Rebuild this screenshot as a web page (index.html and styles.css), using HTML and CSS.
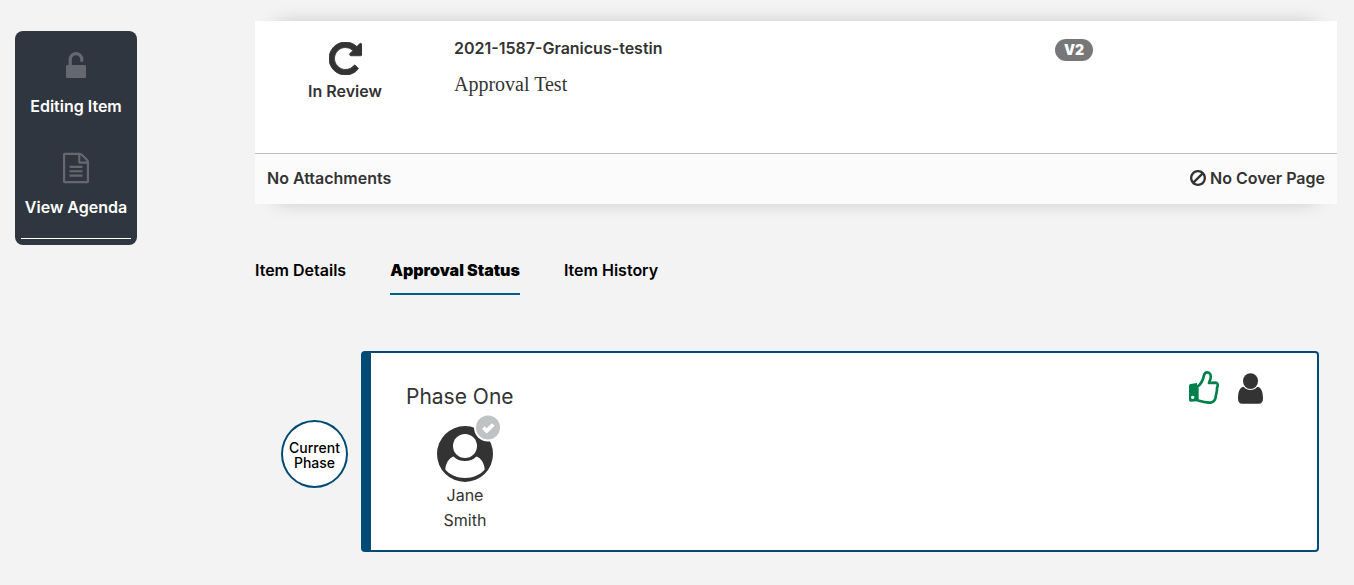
FILE: index.html
```html
<!DOCTYPE html>
<html lang="en">
<head>
<meta charset="utf-8">
<meta name="viewport" content="width=device-width, initial-scale=1">
<title>Approval Status</title>
<link rel="stylesheet" href="styles.css">
</head>
<body>
<div class="page">
  <nav class="sidebar" aria-label="Item actions">
    <a class="side-link" href="#edit">
      <svg class="side-icon" viewBox="0 2 26 32" aria-hidden="true"><path d="M7.200 17V10.500a5.800 5.800 0 0 1 11.600 0V11.500" fill="none" stroke="currentColor" stroke-width="3.200" stroke-linecap="round"/><rect x="3" y="16" width="20" height="13" rx="1.300" fill="currentColor"/></svg>
      <span>Editing Item</span>
    </a>
    <a class="side-link" href="#agenda">
      <svg class="side-icon" viewBox="128 0 1536 1792" aria-hidden="true"><path fill="currentColor" d="M1596 380q28 28 48 76t20 88v1152q0 40-28 68t-68 28h-1344q-40 0-68-28t-28-68v-1600q0-40 28-68t68-28h896q40 0 88 20t76 48zm-444-244v376h376q-10-29-22-41l-313-313q-12-12-41-22zm384 1528v-1024h-416q-40 0-68-28t-28-68v-416h-768v1536h1280zm-1024-864q0-14 9-23t23-9h704q14 0 23 9t9 23v64q0 14-9 23t-23 9h-704q-14 0-23-9t-9-23v-64zm736 224q14 0 23 9t9 23v64q0 14-9 23t-23 9h-704q-14 0-23-9t-9-23v-64q0-14 9-23t23-9h704zm0 256q14 0 23 9t9 23v64q0 14-9 23t-23 9h-704q-14 0-23-9t-9-23v-64q0-14 9-23t23-9h704z"/></svg>
      <span>View Agenda</span>
    </a>
    <hr class="side-rule">
  </nav>

  <main class="content">
    <section class="item-card">
      <div class="item-top">
        <div class="item-state">
          <svg class="state-icon" viewBox="128 128 1536 1536" aria-hidden="true"><path fill="currentColor" stroke="currentColor" stroke-width="40" d="M1664 256v448q0 26-19 45t-45 19h-448q-42 0-59-40-17-39 14-69l138-138q-148-137-349-137-104 0-198.500 40.500t-163.500 109.500-109.500 163.500-40.500 198.500 40.500 198.500 109.500 163.500 163.500 109.500 198.500 40.500q119 0 225-52t179-147q7-10 23-12 15 0 25 9l137 138q9 8 9.500 20.500t-7.500 22.500q-109 132-264 204.500t-327 72.500q-156 0-298-61t-245-164-164-245-61-298 61-298 164-245 245-164 298-61q147 0 284.500 55.500t244.500 156.500l130-129q29-31 70-14 39 17 39 59z"/></svg>
          <span>In Review</span>
        </div>
        <div class="item-info">
          <h1 class="item-number">2021-1587-Granicus-testin</h1>
          <p class="item-title">Approval Test</p>
        </div>
        <div class="item-version"><span class="badge">V2</span></div>
      </div>
      <div class="item-bottom">
        <span>No Attachments</span>
        <span class="cover">
          <svg class="ban-icon" viewBox="128 125 1536 1539" aria-hidden="true"><path fill="currentColor" d="M1440 893q0-161-87-295l-754 753q137 89 297 89 111 0 211.500-43.500t173.500-116.500 116-174.500 43-212.500zm-999 299l755-754q-135-91-300-91-148 0-273 73t-198 199-73 274q0 162 89 299zm1223-299q0 157-61 300t-163.500 246-245 164-298.500 61-298.500-61-245-164-163.500-246-61-300 61-299.500 163.500-245.500 245-164 298.500-61 298.500 61 245 164 163.500 245.500 61 299.500z"/></svg>
          No Cover Page
        </span>
      </div>
    </section>

    <nav class="tabs" aria-label="Item sections">
      <a class="tab" href="#details">Item Details</a>
      <a class="tab tab-active" href="#approval" aria-current="page">Approval Status</a>
      <a class="tab" href="#history">Item History</a>
    </nav>

    <section class="phase-row">
      <div class="phase-marker">Current Phase</div>
      <div class="phase-panel">
        <div>
          <h2 class="phase-name">Phase One</h2>
          <div class="approver">
            <svg class="avatar" viewBox="0 0 66 68" aria-hidden="true">
              <circle cx="29" cy="39" r="28" fill="#333"/>
              <circle cx="29" cy="31" r="12" fill="#fff"/>
              <path d="M17.500 41.500C13 43 9.500 48.500 9.300 54.500C14 60 21 63 29 63C37 63 44 60 48.700 54.500C48.500 48.500 45 43 40.500 41.500C37.500 44.500 33.500 46 29 46C24.500 46 20.500 44.500 17.500 41.500Z" fill="#fff"/>
              <circle cx="52" cy="12.500" r="14" fill="#fff"/>
              <circle cx="52" cy="12.500" r="12" fill="#bfc3c4"/>
              <path d="M47.300 12.600L50.700 15.900L57.300 9.500" fill="none" stroke="#fff" stroke-width="3.800"/>
            </svg>
            <span class="approver-name">Jane Smith</span>
          </div>
        </div>
        <div class="phase-actions">
          <button class="icon-button approve" type="button" aria-label="Approve">
            <svg class="thumb" viewBox="0 0 90 99" aria-hidden="true">
              <path d="M25 47C35 41 40 30 43 21C45 11 46 4 54 4C63 4 66 11 65 20C64 27 61 32 60 36L78 35C86 35 88 42 85 47C84 51 83 54 84 58C83 61 83 64 82 68C81 72 80 75 80 79C78 89 73 94 65 95C50 96 35 91 25 88Z" fill="none" stroke="currentColor" stroke-width="8" stroke-linejoin="round"/>
              <path fill="currentColor" fill-rule="evenodd" d="M5 39L24 36V91L5 92Q0 92 0 87V45Q0 39 5 39ZM11 74a5 5 0 1 0 .1 0Z"/>
            </svg>
          </button>
          <button class="icon-button" type="button" aria-label="Approver">
            <svg class="person" viewBox="0 0 76 93" aria-hidden="true"><ellipse cx="38" cy="24" rx="23" ry="24" fill="currentColor"/><path fill="currentColor" d="M17 41C23 48 30 51 38 51S53 48 59 41C72 43 76 60 76 77C76 87 72 93 63 93H13C4 93 0 87 0 77C0 60 4 43 17 41Z"/></svg>
          </button>
        </div>
      </div>
    </section>
  </main>
</div>
</body>
</html>
```
FILE: styles.css
```css
* {
  box-sizing: border-box;
}

body {
  margin: 0;
  background: #f3f3f3;
  color: #333;
  font: 600 16px/24px Inter, "Liberation Sans", sans-serif;
}

h1, h2, p {
  margin: 0;
}

a {
  color: inherit;
  text-decoration: none;
}

svg {
  display: block;
}

.page {
  display: flex;
  align-items: flex-start;
  gap: 118px;
  padding: 21px 17px 32px 15px;
}

.sidebar {
  flex: none;
  width: 122px;
  margin-top: 10px;
  padding: 20px 6px 6px;
  border-radius: 8px;
  background: #303640;
  color: #fff;
}

.side-link {
  display: flex;
  flex-direction: column;
  align-items: center;
  gap: 11px;
  margin-bottom: 34px;
  white-space: nowrap;
}

.side-link + .side-link {
  margin-bottom: 19px;
}

.side-icon {
  width: 26px;
  height: 32px;
  color: #646871;
}

.side-rule {
  height: 1px;
  margin: 0;
  border: 0;
  background: #fff;
}

.content {
  flex: 1;
  min-width: 0;
}

.item-card {
  position: relative;
  isolation: isolate;
}

.item-card::before {
  content: "";
  position: absolute;
  z-index: -1;
  inset: 6px 22px;
  box-shadow: 0 0 20px rgba(0, 0, 0, 0.3);
}

.item-top {
  display: grid;
  grid-template-columns: 180px 1fr 282px;
  min-height: 132px;
  background: #fff;
}

.item-state {
  display: flex;
  flex-direction: column;
  align-items: center;
  gap: 4px;
  padding-top: 21px;
}

.state-icon {
  width: 33px;
  height: 33px;
}

.item-info {
  padding: 15px 19px;
}

.item-number {
  font-size: 16px;
  line-height: 24px;
  font-weight: 600;
}

.item-title {
  margin-top: 12px;
  font: 400 20px/24px "Liberation Serif", serif;
}

.item-version {
  padding-top: 18px;
}

.badge {
  display: block;
  width: 38px;
  border-radius: 11px;
  background: #777;
  color: #fff;
  font-size: 14px;
  font-weight: 900;
  line-height: 22px;
  text-align: center;
}

.item-bottom {
  display: flex;
  justify-content: space-between;
  padding: 12px 12px 14px;
  border-top: 1px solid #c0c0c0;
  background: #fbfbfb;
}

.cover {
  display: flex;
  align-items: center;
  gap: 4px;
}

.ban-icon {
  width: 16px;
  height: 16px;
}

.tabs {
  display: flex;
  gap: 44px;
  margin-top: 54px;
  color: #000;
}

.tab {
  padding-bottom: 11px;
  border-bottom: 2px solid transparent;
}

.tab-active {
  border-color: #005f86;
  font-weight: 900;
}

.phase-row {
  display: flex;
  align-items: center;
  gap: 13px;
  margin: 56px 18px 0 26px;
}

.phase-marker {
  display: flex;
  flex: none;
  align-items: center;
  width: 67px;
  height: 68px;
  margin-top: 5px;
  padding-top: 2px;
  border: 2px solid #004b75;
  border-radius: 50%;
  background: #fff;
  color: #000;
  font-size: 14px;
  line-height: 15px;
  font-weight: 500;
  text-align: center;
}

.phase-panel {
  display: flex;
  flex: 1;
  justify-content: space-between;
  padding: 18px 54px 17px 35px;
  border: 2px solid #004b75;
  border-left-width: 10px;
  border-radius: 4px;
  background: #fff;
}

.phase-name {
  padding-top: 14px;
  font-size: 21px;
  line-height: 24px;
  font-weight: 400;
}

.approver {
  display: flex;
  flex-direction: column;
  align-items: center;
  width: 118px;
  padding-top: 6px;
}

.avatar {
  width: 66px;
  height: 68px;
  margin-left: 8px;
}

.approver-name {
  width: 60px;
  font-weight: 400;
  line-height: 25px;
  text-align: center;
}

.phase-actions {
  display: flex;
  align-items: flex-start;
  gap: 19px;
}

.icon-button {
  padding: 0;
  border: 0;
  background: none;
  color: #333;
  cursor: pointer;
}

.approve {
  color: #00804c;
}

.thumb {
  width: 30px;
  height: 33px;
}

.person {
  width: 25px;
  height: 31px;
  margin-top: 2px;
}
```
